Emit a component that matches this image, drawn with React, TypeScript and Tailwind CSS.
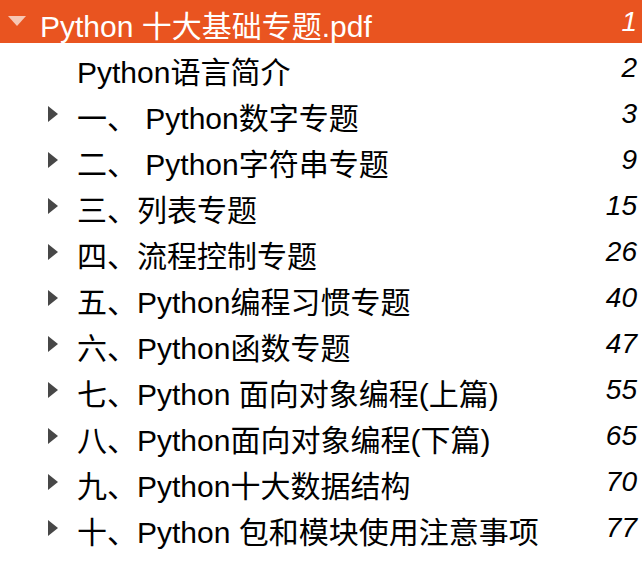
import React from 'react';

interface OutlineItem {
  title: string;
  page: number;
  expandable: boolean;
}

const ITEMS: OutlineItem[] = [
  { title: 'Python语言简介', page: 2, expandable: false },
  { title: '一、 Python数字专题', page: 3, expandable: true },
  { title: '二、 Python字符串专题', page: 9, expandable: true },
  { title: '三、列表专题', page: 15, expandable: true },
  { title: '四、流程控制专题', page: 26, expandable: true },
  { title: '五、Python编程习惯专题', page: 40, expandable: true },
  { title: '六、Python函数专题', page: 47, expandable: true },
  { title: '七、Python 面向对象编程(上篇)', page: 55, expandable: true },
  { title: '八、Python面向对象编程(下篇)', page: 65, expandable: true },
  { title: '九、Python十大数据结构', page: 70, expandable: true },
  { title: '十、Python 包和模块使用注意事项', page: 77, expandable: true },
];

function Collapsed() {
  return (
    <svg width="10" height="16" viewBox="0 0 10 16" className="shrink-0">
      <path d="M0 0 L10 8 L0 16 Z" fill="#474747" />
    </svg>
  );
}

function Expanded() {
  return (
    <svg width="18" height="10" viewBox="0 0 18 10" className="shrink-0">
      <path d="M0 0 L18 0 L9 10 Z" fill="#f7c7b4" />
    </svg>
  );
}

export default function App() {
  return (
    <div className="w-[642px] h-[572px] bg-white overflow-hidden font-['Liberation_Sans','Noto_Sans_CJK_SC',sans-serif]">
      <div className="-mt-[3px]">
        <div className="h-[46px] bg-[#e95420] text-white flex items-start pl-[8px] pr-[5px]">
          <div className="w-[32px] pt-[19px] flex">
            <Expanded />
          </div>
          <span className="text-[30px] pt-[7px] leading-[46px] flex-1 whitespace-nowrap">Python 十大基础专题.pdf</span>
          <span className="text-[28px] pt-[2px] italic leading-[46px]">1</span>
        </div>

        {ITEMS.map(item => (
          <div key={item.page} className="h-[46px] flex items-start pl-[48px] pr-[5px] text-black">
            <div className="w-[29px] pt-[17px] flex">
              {item.expandable && <Collapsed />}
            </div>
            <span className="text-[30px] pt-[7px] leading-[46px] flex-1 whitespace-nowrap">{item.title}</span>
            <span className="text-[28px] pt-[2px] italic leading-[46px]">{item.page}</span>
          </div>
        ))}
      </div>
    </div>
  );
}
